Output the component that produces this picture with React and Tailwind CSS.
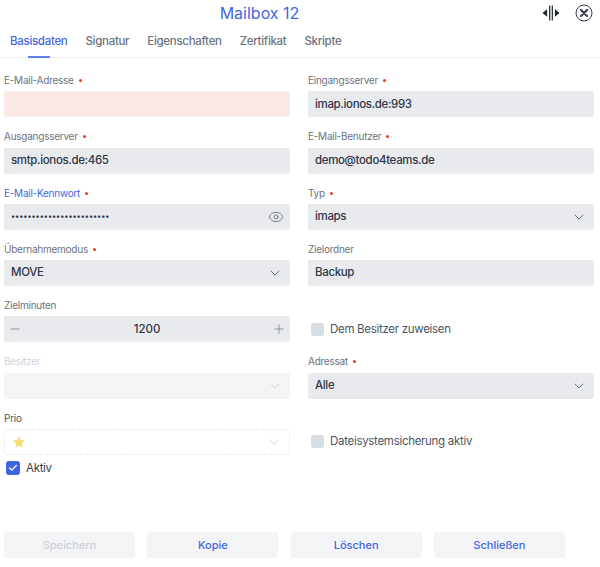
import { ChevronDown, Eye, Minus, Plus, Check } from "lucide-react"

const fieldBox = "flex h-[26px] items-center rounded-[3px] bg-[#e9eaee] px-[7px] text-[11.5px] tracking-[-0.35px] font-medium text-[#2f3746]"

function Label({ children, required, active, disabled }) {
  let color = "text-[#6b7280]"
  if (active) color = "text-[#3f66e0]"
  if (disabled) color = "text-[#cfd2d9]"
  return (
    <div className={`flex h-[22.25px] items-center pt-[1px] text-[10px] tracking-[-0.25px] ${color}`}>
      {children}
      {required ? <span className="ml-[5px] h-[3px] w-[3px] rounded-full bg-[#ea3a1c]" /> : null}
    </div>
  )
}

function TextField({ label, required, value, invalid }) {
  return (
    <div>
      <Label required={required}>{label}</Label>
      <div className={invalid ? "h-[26px] rounded-[3px] bg-[#f9e8e6]" : fieldBox}>{value}</div>
    </div>
  )
}

function SelectField({ label, required, value }) {
  return (
    <div>
      <Label required={required}>{label}</Label>
      <div className={`${fieldBox} justify-between`}>
        {value}
        <ChevronDown size={16} strokeWidth={1.5} className="text-[#6b7280]" />
      </div>
    </div>
  )
}

function CheckRow({ label }) {
  return (
    <div className="pt-[22.25px]">
      <div className="flex h-[26px] items-center gap-[6px] pl-[3px] text-[11.5px] tracking-[-0.3px] text-[#4b5563]">
        <span className="h-[13px] w-[13px] rounded-[3px] bg-[#d8dce3]" />
        {label}
      </div>
    </div>
  )
}

function ActionButton({ children, disabled }) {
  return (
    <button
      className={`h-[26px] w-[131px] rounded-[3px] bg-[#f3f4f6] text-[11px] font-medium ${
        disabled ? "text-[#cdd0d7]" : "text-[#3f66e0]"
      }`}
    >
      {children}
    </button>
  )
}

const tabs = ["Basisdaten", "Signatur", "Eigenschaften", "Zertifikat", "Skripte"]

export default function App() {
  return (
    <div className="flex h-[567px] w-[600px] flex-col bg-white font-['Inter',sans-serif]">
      <div className="flex h-[26px] items-center">
        <h1 className="flex-1 text-center text-[16px] text-[#3f66e0]">Mailbox 12</h1>
        <div className="flex w-[81px] items-center gap-[15px] pl-[23px]">
          <svg width="18" height="18" viewBox="0 0 18 18" fill="none" stroke="#1f2430" strokeWidth="1.2">
            <path d="M7.7 1.5v15M10.3 1.5v15M1 9h4M13 9h4" />
            <path d="M4.5 6.5 1.5 9l3 2.5zM13.5 6.5l3 2.5-3 2.5z" fill="#1f2430" />
          </svg>
          <svg width="18" height="18" viewBox="0 0 18 18" fill="none" stroke="#374151">
            <circle cx="9" cy="9" r="8" strokeWidth="1" />
            <path d="M6 6l6 6M12 6l-6 6" strokeWidth="2.2" strokeLinecap="round" />
          </svg>
        </div>
      </div>

      <div className="flex h-[32px] gap-[18px] border-b border-[#eff0f2] pl-[10px] text-[11.5px] tracking-[-0.3px] font-medium text-[#6b7280]">
        {tabs.map((tab, i) => (
          <div key={tab} className={`relative flex items-center ${i === 0 ? "text-[#3f66e0]" : ""}`}>
            {tab}
            {i === 0 ? <span className="absolute bottom-[-1px] left-[18px] h-[2px] w-[22px] bg-[#5c80ee]" /> : null}
          </div>
        ))}
      </div>

      <div className="grid auto-rows-[56.25px] grid-cols-2 gap-x-[18px] pl-[4px] pr-[6px] pt-[11px]">
        <TextField label="E-Mail-Adresse" required invalid />
        <TextField label="Eingangsserver" required value="imap.ionos.de:993" />
        <TextField label="Ausgangsserver" required value="smtp.ionos.de:465" />
        <TextField label="E-Mail-Benutzer" required value="demo@todo4teams.de" />

        <div>
          <Label required active>E-Mail-Kennwort</Label>
          <div className={`${fieldBox} justify-between`}>
            <span className="text-[7.7px] tracking-normal">••••••••••••••••••••••••</span>
            <Eye size={16} strokeWidth={1.3} className="-mr-[1px] text-[#6b7280]" />
          </div>
        </div>
        <SelectField label="Typ" required value="imaps" />

        <SelectField label="Übernahmemodus" required value="MOVE" />
        <TextField label="Zielordner" value="Backup" />

        <div>
          <Label>Zielminuten</Label>
          <div className={`${fieldBox} justify-between`}>
            <Minus size={14} strokeWidth={1.2} className="-ml-[3px] text-[#6b7280]" />
            <span className="tracking-normal">1200</span>
            <Plus size={14} strokeWidth={1.2} className="-mr-[3px] text-[#6b7280]" />
          </div>
        </div>
        <CheckRow label="Dem Besitzer zuweisen" />

        <div>
          <Label disabled>Besitzer</Label>
          <div className="flex h-[26px] items-center justify-end rounded-[3px] bg-[#f3f4f6] px-[7px]">
            <ChevronDown size={16} strokeWidth={1.5} className="text-[#d5d7dd]" />
          </div>
        </div>
        <SelectField label="Adressat" required value="Alle" />

        <div>
          <div className="flex h-[22.25px] items-center pt-[1px] text-[10px] tracking-[-0.25px] text-[#4b5563]">Prio</div>
          <div className="flex h-[26px] items-center justify-between rounded-[3px] border border-dashed border-[#e9eaee] px-[7px]">
            <svg width="14" height="14" viewBox="0 0 24 24" fill="#f6dc78">
              <path d="M12 1.5l3.2 7 7.3.8-5.4 5 1.5 7.5L12 18l-6.6 3.8 1.5-7.5-5.4-5 7.3-.8z" />
            </svg>
            <ChevronDown size={16} strokeWidth={1.5} className="text-[#d5d7dd]" />
          </div>
        </div>
        <CheckRow label="Dateisystemsicherung aktiv" />
      </div>

      <div className="-mt-[3px] flex items-center gap-[6px] pl-[6px] text-[11.5px] tracking-[-0.3px] text-[#374151]">
        <span className="flex h-[14px] w-[14px] items-center justify-center rounded-[3px] bg-[#3f66e0]">
          <Check size={10} strokeWidth={3} className="text-white" />
        </span>
        Aktiv
      </div>

      <div className="mt-auto flex gap-[12.3px] pb-[9px] pl-[4px]">
        <ActionButton disabled>Speichern</ActionButton>
        <ActionButton>Kopie</ActionButton>
        <ActionButton>Löschen</ActionButton>
        <ActionButton>Schließen</ActionButton>
      </div>
    </div>
  )
}
